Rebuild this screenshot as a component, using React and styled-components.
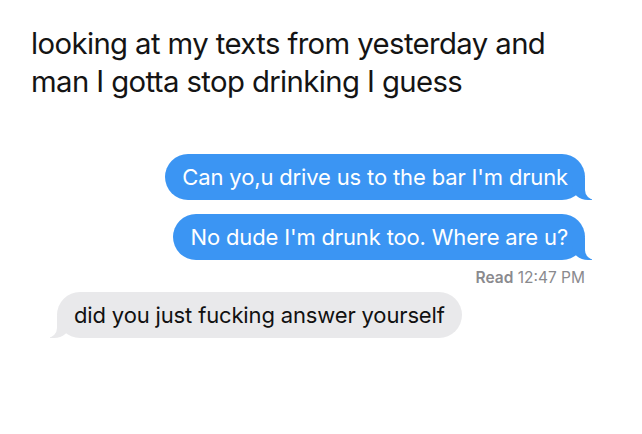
import React from "react";
import styled, { createGlobalStyle } from "styled-components";

const Global = createGlobalStyle`
  html, body { margin: 0; padding: 0; background: #ffffff; }
  body { width: 642px; height: 434px; overflow: hidden; }
`;

const Page = styled.div`
  display: flex;
  flex-direction: column;
  width: 642px;
  height: 434px;
  background: #ffffff;
  box-sizing: border-box;
  padding: 25px 0 0 0;
`;

const Caption = styled.p`
  margin: 0 0 0 31px;
  font-family: Inter, "Noto Sans", sans-serif;
  font-size: 29.3px;
  line-height: 38px;
  letter-spacing: -0.6px;
  color: #141414;
  font-weight: 400;
`;

const Thread = styled.div`
  display: flex;
  flex-direction: column;
  margin-top: 53px;
  padding: 0 57px 0 57px;
`;

const Bubble = styled.div`
  position: relative;
  box-sizing: border-box;
  height: 46px;
  display: flex;
  align-items: center;
  padding: 0 17px;
  border-radius: 23px;
  font-family: Inter, "Liberation Sans", sans-serif;
  font-size: 22px;
  letter-spacing: -0.15px;
  white-space: nowrap;
  align-self: ${(p) => (p.$sent ? "flex-end" : "flex-start")};
  background: ${(p) => (p.$sent ? "#3b95f3" : "#e9e9eb")};
  color: ${(p) => (p.$sent ? "#ffffff" : "#111111")};
  margin-top: ${(p) => p.$gap || 0}px;

  &::before {
    content: "";
    position: absolute;
    bottom: 0;
    height: 22px;
    width: 20px;
    background: ${(p) => (p.$sent ? "#3b95f3" : "#e9e9eb")};
    ${(p) =>
      p.$sent
        ? "right: -7px; border-bottom-left-radius: 16px 14px;"
        : "left: -7px; border-bottom-right-radius: 16px 14px;"}
  }
  &::after {
    content: "";
    position: absolute;
    bottom: 0;
    height: 22px;
    width: 26px;
    background: #ffffff;
    ${(p) =>
      p.$sent
        ? "right: -26px; border-bottom-left-radius: 10px;"
        : "left: -26px; border-bottom-right-radius: 10px;"}
  }
`;

const BubbleText = styled.span`
  position: relative;
  z-index: 1;
`;

const Receipt = styled.div`
  align-self: flex-end;
  margin-top: 9px;
  font-family: Inter, "Liberation Sans", sans-serif;
  font-size: 15.5px;
  line-height: 17px;
  color: #8a8a8e;
`;

const ReceiptLabel = styled.span`
  font-weight: 600;
`;

export default function App() {
  return (
    <>
      <Global />
      <Page>
        <Caption>
          looking at my texts from yesterday and
          <br />
          man I gotta stop drinking I guess
        </Caption>
        <Thread>
          <Bubble $sent>
            <BubbleText>Can yo,u drive us to the bar I'm drunk</BubbleText>
          </Bubble>
          <Bubble $sent $gap={14}>
            <BubbleText>No dude I'm drunk too. Where are u?</BubbleText>
          </Bubble>
          <Receipt>
            <ReceiptLabel>Read</ReceiptLabel> 12:47 PM
          </Receipt>
          <Bubble $gap={6}>
            <BubbleText>did you just fucking answer yourself</BubbleText>
          </Bubble>
        </Thread>
      </Page>
    </>
  );
}
